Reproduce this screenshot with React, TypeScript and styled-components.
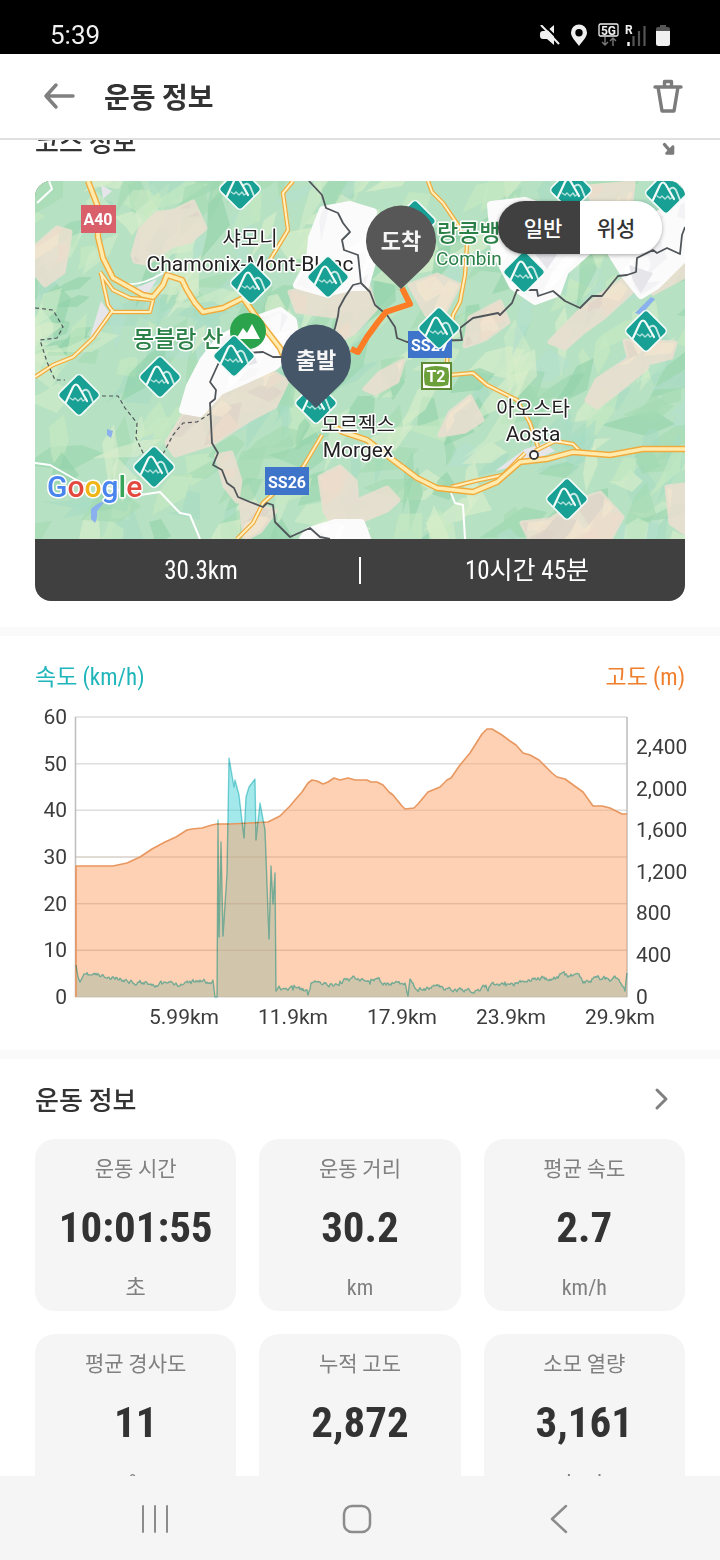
import React, { useLayoutEffect, useRef, useState } from 'react';
import styled, { createGlobalStyle } from 'styled-components';

const GlobalStyle = createGlobalStyle`
  *, *::before, *::after { box-sizing: border-box; }
  body { margin: 0; background: #fff; }
  button { border: 0; padding: 0; background: none; font: inherit; color: inherit; cursor: pointer; }
  h1, h2, p, dl, dt, dd { margin: 0; }
`;

const sans = `Roboto, 'Noto Sans CJK KR', sans-serif`;
const hangul = `'Noto Sans CJK KR', sans-serif`;
const narrow = `'Roboto Condensed', Roboto, 'Noto Sans CJK KR', sans-serif`;

/* ---------- page shell ---------- */

const Screen = styled.div`
  display: flex;
  flex-direction: column;
  height: 100vh;
  background: #fff;
  color: #333;
  font-family: ${hangul};
`;

const StatusBar = styled.div`
  flex: none;
  display: flex;
  align-items: flex-end;
  justify-content: space-between;
  height: 54px;
  padding: 0 50px 4px;
  background: #000;
  color: #f0f0f0;
`;

const Clock = styled.time`
  font: 400 26px/30px ${sans};
`;

const StatusIcons = styled.div`
  display: flex;
  align-items: center;
  gap: 10px;
  height: 30px;
`;

const AppBar = styled.header`
  flex: none;
  display: flex;
  align-items: center;
  height: 86px;
  padding: 0 35px 0 43px;
  border-bottom: 2px solid #e0e0e0;
`;

const IconButton = styled.button`
  display: flex;
  align-items: center;
  justify-content: center;
  width: 34px;
  height: 40px;
`;

const AppTitle = styled.h1`
  flex: 1;
  padding-left: 27px;
  font-size: 28px;
  line-height: 40px;
  font-weight: 700;
`;

const Content = styled.main`
  flex: 1;
  min-height: 0;
  overflow-y: auto;
  scrollbar-width: none;
`;

const Section = styled.section`
  padding: 0 35px 26px;
  & + & { border-top: 9px solid #fafafa; }
`;

const SectionHead = styled.div`
  display: flex;
  align-items: center;
  justify-content: space-between;
  height: 80px;
  padding-right: 6px;
`;

const SectionTitle = styled.h2`
  font-size: 26px;
  line-height: 36px;
  font-weight: 500;
`;

const NavBar = styled.nav`
  flex: none;
  display: grid;
  grid-template-columns: repeat(3, 1fr);
  height: 84px;
  padding: 2px 60px 0 54px;
  background: #f5f5f5;
`;

const NavButton = styled.button`
  display: flex;
  align-items: center;
  justify-content: center;
`;

/* ---------- course card ---------- */

const CourseCard = styled.div`
  position: relative;
  overflow: hidden;
  border-radius: 16px;
  background: #404040;
`;

const MapSvg = styled.svg`
  display: block;
  width: 100%;
  height: auto;
`;

const MapSwitch = styled.div`
  position: absolute;
  top: 20px;
  right: 23px;
  display: flex;
  overflow: hidden;
  border-radius: 27px;
  box-shadow: 0 1px 4px rgba(0, 0, 0, 0.35);
`;

const MapSwitchButton = styled.button<{ $active: boolean; $side: 'left' | 'right' }>`
  width: 82px;
  height: 53px;
  padding: ${(p) => (p.$side === 'left' ? '0 0 2px 8px' : '0 10px 2px 0')};
  background: ${(p) => (p.$active ? '#404040' : '#fff')};
  color: ${(p) => (p.$active ? '#fff' : '#333')};
  font-size: 21px;
  font-weight: 500;
`;

const CourseSummary = styled.div`
  display: grid;
  grid-template-columns: 1fr 2px 1fr;
  align-items: center;
  height: 62px;
  color: #fff;
  font: 400 25px/36px ${narrow};
  text-align: center;
`;

const SummaryText = styled.span`
  padding: 2px 0 0 8px;
`;

const SummaryRule = styled.span`
  height: 27px;
  background: #fff;
`;

/* ---------- chart ---------- */

const ChartLegend = styled.div`
  display: flex;
  justify-content: space-between;
  padding-top: 25px;
  font: 400 23px/34px ${narrow};
`;

const LegendItem = styled.span<{ $color: string }>`
  color: ${(p) => p.$color};
`;

const ChartSvg = styled.svg`
  display: block;
  overflow: visible;
  width: 100%;
  height: auto;
  margin-top: 5px;
  font: 400 21px ${sans};
`;

/* ---------- stats ---------- */

const StatGrid = styled.dl`
  display: grid;
  grid-template-columns: repeat(3, 1fr);
  gap: 23px;
`;

const StatCard = styled.div`
  display: flex;
  flex-direction: column;
  align-items: center;
  height: 172px;
  padding-top: 13px;
  border-radius: 20px;
  background: #f5f5f5;
`;

const StatLabel = styled.dt`
  color: #808080;
  font-size: 21px;
  line-height: 30px;
`;

const StatValue = styled.dd`
  margin-top: 15px;
  font: 700 43px/60px ${narrow};
`;

const StatUnit = styled.dd`
  margin-top: 16px;
  color: #808080;
  font: 400 22px/30px ${narrow};
`;

/* ---------- data ---------- */

type Point = [number, number];

const poly = (pts: Point[]) => pts.map((p) => p.join(' ')).join(' ');
const path = (pts: Point[]) => 'M' + pts.map((p) => p.join(' ')).join('L');

const randomFrom = (seed: number) => {
  let s = seed;
  return () => {
    s = (s * 16807) % 2147483647;
    return s / 2147483647;
  };
};

/* Ridge shading: long, thin facets that mostly run south-west to north-east. */
const makeFacets = (seed: number, count: number, tones: string[]) => {
  const rnd = randomFrom(seed);
  return Array.from({ length: count }, () => {
    const cx = rnd() * 680 - 15;
    const cy = rnd() * 380 - 10;
    const len = 12 + rnd() * 28;
    const wid = 6 + rnd() * 13;
    const a = -0.8 + (rnd() - 0.5) * 1.5;
    const c = Math.cos(a);
    const s = Math.sin(a);
    const corner = (u: number, v: number): Point => [
      Math.round(cx + u * c - v * s),
      Math.round(cy + u * s + v * c),
    ];
    return {
      fill: tones[Math.floor(rnd() * tones.length)],
      pts: [
        corner(-len, (rnd() - 0.5) * wid),
        corner(-len * 0.3, -wid * rnd()),
        corner(len * 0.5, -wid * 0.8),
        corner(len, (rnd() - 0.5) * wid),
        corner(len * 0.2, wid),
      ] as Point[],
    };
  });
};

const forestFacets = makeFacets(77, 380, ['#8fd2a8', '#a3dab3', '#d0ecc8', '#c6e9c2', '#a6dcc4', '#dbefcb', '#9ad6ae', '#b4e0cd']);
const rockFacets = makeFacets(19, 260, ['#f3e6cf', '#ddd3c8', '#ecdccb', '#e2dfd0']);
const snowFacets = makeFacets(41, 160, ['#ffffff', '#f0f0f3', '#f6f6f8']);

const rockAreas: Point[][] = [
  [[98, 74], [105, 49], [122, 33], [140, 30], [158, 21], [170, 47], [155, 60], [138, 64], [112, 82], [100, 80]],
  [[0, 66], [22, 47], [35, 51], [32, 70], [28, 91], [10, 104], [0, 92]],
  [[132, 262], [150, 232], [180, 215], [205, 190], [232, 188], [252, 200], [240, 225], [215, 238], [178, 262], [140, 274]],
  [[182, 275], [196, 272], [205, 300], [202, 320], [190, 305]],
  [[285, 296], [305, 286], [320, 300], [322, 320], [352, 307], [363, 319], [352, 329], [328, 339], [302, 350], [290, 330]],
  [[487, 342], [515, 339], [548, 318], [565, 312], [587, 336], [575, 358], [495, 358]],
  [[632, 306], [650, 304], [650, 352], [636, 342]],
  [[552, 219], [562, 199], [592, 179], [612, 186], [588, 206], [562, 226]],
  [[415, 232], [435, 216], [447, 239], [430, 250], [405, 254]],
  [[515, 161], [548, 127], [595, 94], [604, 104], [570, 135], [548, 151], [530, 167]],
  [[435, 137], [465, 121], [473, 141], [450, 158], [430, 165]],
  [[608, 100], [648, 77], [650, 95], [618, 112]],
  [[255, 111], [298, 104], [320, 110], [300, 135], [262, 130]],
  [[305, 127], [332, 101], [340, 128], [318, 152], [302, 160]],
  [[375, 104], [402, 94], [424, 104], [410, 130], [392, 134]],
  [[330, 208], [345, 192], [368, 180], [362, 200], [340, 212]],
  [[552, 6], [598, 2], [596, 22], [560, 26]],
  [[206, 320], [240, 330], [225, 350], [210, 358]],
  [[590, 160], [640, 162], [636, 176], [596, 186]],
];

const snowAreas: Point[][] = [
  [[277, 57], [288, 29], [315, 24], [338, 31], [336, 47], [340, 71], [330, 106], [315, 106], [290, 112], [262, 104], [275, 80]],
  [[148, 229], [155, 205], [168, 180], [185, 158], [225, 137], [245, 130], [258, 140], [262, 166], [240, 185], [212, 198], [185, 210], [165, 232]],
  [[456, 24], [490, 20], [545, 40], [562, 62], [530, 90], [522, 112], [500, 120], [478, 105], [460, 70]],
  [[575, 70], [610, 40], [650, 20], [650, 76], [622, 104], [606, 114], [590, 94]],
  [[274, 350], [300, 342], [326, 342], [332, 358], [268, 358]],
];

const majorRoads: Point[][] = [
  [[53, 0], [63, 26], [63, 56], [68, 77], [78, 97], [108, 114], [118, 116], [128, 104], [132, 94], [147, 99], [152, 109], [160, 122], [168, 131], [188, 127], [208, 117], [225, 141], [245, 167], [255, 190]],
  [[300, 246], [308, 251], [332, 259], [358, 279], [382, 297], [402, 307], [438, 311], [462, 301], [485, 281], [512, 278], [538, 271], [575, 274], [608, 268], [650, 268]],
];

const minorRoads: Point[][] = [
  [[65, 91], [78, 109], [95, 117], [118, 119], [115, 131], [78, 131], [73, 124], [66, 92]],
  [[78, 129], [58, 157], [38, 176], [18, 184], [0, 196]],
  [[258, 0], [248, 12], [253, 49], [232, 84]],
  [[393, 0], [397, 11], [408, 22], [425, 47], [432, 64], [430, 94], [425, 121], [418, 134], [412, 180], [415, 194], [438, 192], [452, 204], [482, 219], [495, 242], [503, 266]],
  [[287, 254], [268, 286], [228, 322], [218, 342], [202, 358]],
  [[500, 270], [520, 260], [538, 263], [545, 270]],
  [[416, 306], [440, 300], [468, 294], [490, 272]],
];

const borders: Point[][] = [
  [[274, 0], [287, 14], [291, 27], [303, 32], [308, 42], [315, 51], [307, 59], [309, 69], [323, 74], [326, 102], [335, 111], [340, 124], [352, 134], [360, 146], [362, 157], [372, 161], [427, 159], [425, 147], [438, 137], [463, 132], [465, 134], [477, 122], [482, 109], [502, 109], [503, 115], [518, 110], [530, 120], [545, 127], [557, 115], [567, 115], [583, 95], [592, 94], [601, 91], [602, 77], [618, 69], [622, 72], [632, 67], [645, 73], [647, 54], [650, 46]],
  [[326, 102], [318, 104], [310, 116], [304, 127], [303, 135], [300, 147], [290, 172], [247, 176], [238, 176], [228, 171], [210, 172], [185, 179], [175, 201], [181, 209], [180, 218], [175, 222], [177, 262], [183, 272], [178, 284], [187, 289], [192, 302], [199, 307], [203, 316], [215, 321], [228, 326], [232, 322], [238, 324], [240, 341], [255, 356], [275, 347], [285, 356], [295, 358]],
];

const regionBorders: Point[][] = [
  [[0, 127], [18, 129], [28, 146], [22, 157], [5, 159], [12, 181], [20, 199], [30, 199]],
  [[60, 215], [83, 215], [90, 227], [102, 242], [101, 257], [110, 276]],
  [[128, 273], [138, 254], [148, 242], [162, 241], [176, 232]],
];

const peaks: Point[] = [
  [205, 8], [536, 9], [631, 12], [216, 102], [293, 96], [380, 40], [489, 91], [611, 150],
  [404, 147], [125, 196], [44, 214], [199, 175], [119, 286], [532, 318], [281, 222],
];

const route: Point[] = [[367, 107], [375, 123], [351, 131], [343, 141], [332, 156], [323, 171], [316, 168]];

const elevation: Point[] = [
  [41, 166], [78, 166], [92, 163], [105, 157], [117, 149], [130, 142], [141, 137], [152, 130], [157, 129],
  [167, 128], [177, 125], [182, 124], [195, 124], [215, 123], [233, 122], [237, 120], [241, 118], [245, 116],
  [251, 110], [255, 106], [260, 100], [267, 92], [273, 83], [277, 80], [282, 81], [288, 84], [293, 82],
  [299, 78], [305, 80], [313, 78], [320, 80], [332, 80], [336, 82], [342, 82], [348, 85], [354, 92],
  [358, 95], [367, 106], [370, 109], [379, 108], [383, 104], [393, 92], [405, 87], [412, 80], [416, 78],
  [425, 65], [435, 53], [447, 34], [452, 29], [457, 29], [467, 35], [475, 41], [481, 45], [488, 53],
  [495, 55], [504, 60], [517, 73], [522, 77], [530, 79], [548, 92], [558, 106], [567, 106], [575, 108],
  [587, 114], [592, 114],
];

const jitter = (pts: Point[], seed: number): Point[] => {
  const rnd = randomFrom(seed);
  const out: Point[] = [];
  let drift = 0;
  pts.slice(1).forEach(([x1, y1], i) => {
    const [x0, y0] = pts[i];
    out.push([x0, y0]);
    for (let x = x0 + 1; x < x1; x += 1) {
      const t = (x - x0) / (x1 - x0);
      drift = drift * 0.7 + (rnd() - 0.5) * 4;
      out.push([x, Math.round((y0 + (y1 - y0) * t + drift) * 10) / 10]);
    }
  });
  out.push(pts[pts.length - 1]);
  return out;
};

const speed: Point[] = [
  [41, 265], [43, 277], [45, 282],
  ...jitter([[48, 276], [62, 275], [75, 279], [90, 280], [110, 282], [127, 284], [140, 284], [155, 281], [165, 280], [175, 283], [178, 280]], 11),
  [180, 297], [182, 297], [183, 120], [184, 237], [186, 142], [188, 236], [192, 173], [194, 58], [199, 87],
  [200, 80], [204, 95], [209, 138], [211, 97], [214, 87], [220, 79], [221, 140], [225, 103], [230, 130],
  [234, 239], [236, 166], [238, 204], [240, 173], [241, 291],
  ...jitter([[243, 288], [250, 289], [258, 290], [272, 290], [273, 295], [276, 283], [290, 283], [300, 284], [305, 281], [315, 279], [318, 276], [325, 281], [335, 284], [340, 279], [350, 283], [370, 283], [373, 296], [375, 279], [380, 288], [388, 290], [398, 286], [410, 290], [430, 290], [440, 291], [450, 287], [453, 291], [456, 284], [470, 282], [490, 282], [500, 278], [515, 279], [530, 275], [545, 277], [548, 283], [556, 282], [560, 277], [570, 279], [583, 279], [590, 291], [592, 273]], 29),
];

const stats = [
  { label: '운동 시간', value: '10:01:55', unit: '초' },
  { label: '운동 거리', value: '30.2', unit: 'km' },
  { label: '평균 속도', value: '2.7', unit: 'km/h' },
  { label: '평균 경사도', value: '11', unit: '%' },
  { label: '누적 고도', value: '2,872', unit: 'm' },
  { label: '소모 열량', value: '3,161', unit: 'kcal' },
];

/* ---------- map ---------- */

const PeakMarker = ({ at }: { at: Point }) => (
  <g transform={`translate(${at[0]} ${at[1]})`}>
    <rect x="-15.500" y="-15.500" width="31" height="31" rx="4" transform="rotate(45)" fill="#18a094" stroke="#f4fbf8" strokeWidth="1.600" />
    <g fill="none" stroke="#f4fbf8" strokeLinecap="round" strokeLinejoin="round">
      <path d="M-13 7L-6-8Q-3-13 0-8L8 6" strokeWidth="2.200" />
      <path d="M-9 3l3 2 2-2 3 3 3-3 2 3 3-2" strokeWidth="1.400" opacity=".7" />
      <path d="M4-4Q7-7 10-3L14 7" strokeWidth="2" opacity=".8" />
    </g>
  </g>
);

const Pin = ({ at, color, label }: { at: Point; color: string; label: string }) => (
  <g transform={`translate(${at[0]} ${at[1]})`}>
    <path d="M0 48L-23 26A35 35 0 1 1 23 26Z" fill={color} />
    <text y="8" textAnchor="middle" fill="#f5f5f5" fontFamily={hangul} fontSize="22" fontWeight="700">{label}</text>
  </g>
);

const halo = { stroke: '#fff', strokeWidth: 3, paintOrder: 'stroke', strokeLinejoin: 'round' } as const;

const Facets = ({ items, opacity }: { items: ReturnType<typeof makeFacets>; opacity: number }) => (
  <g>
    {items.map((f, i) => <polygon key={i} points={poly(f.pts)} fill={f.fill} opacity={opacity} />)}
  </g>
);

const CourseMap = () => (
  <MapSvg viewBox="0 0 650 358" role="img" aria-label="코스 지도">
    <defs>
      <clipPath id="rock">{rockAreas.map((a, i) => <polygon key={i} points={poly(a)} />)}</clipPath>
      <clipPath id="snow">{snowAreas.map((a, i) => <polygon key={i} points={poly(a)} />)}</clipPath>
    </defs>
    <rect width="650" height="358" fill="#b6e1c2" />
    <Facets items={forestFacets} opacity={0.6} />
    <g fill="#e9dfd0" stroke="#e9dfd0" strokeWidth="5" strokeLinejoin="round" opacity=".9">
      {rockAreas.map((a, i) => <polygon key={i} points={poly(a)} />)}
    </g>
    <g clipPath="url(#rock)"><Facets items={rockFacets} opacity={0.7} /></g>
    <g fill="#fbfbfb" stroke="#fbfbfb" strokeWidth="8" strokeLinejoin="round">
      {snowAreas.map((a, i) => <polygon key={i} points={poly(a)} />)}
    </g>
    <g clipPath="url(#snow)"><Facets items={snowFacets} opacity={0.7} /></g>
    <g fill="#e6e5ea">
      <polygon points="498 70 530 62 512 88" />
      <polygon points="594 84 618 92 606 112 598 100" />
      <polygon points="196 190 215 160 222 182" />
      <polygon points="98 108 122 98 112 114" />
      <polygon points="66 120 76 134 62 156 54 160" />
      <polygon points="66 4 77 10 68 18" />
      <polygon points="460 290 490 268 510 262 520 270 492 282" />
    </g>
    <g fill="#8ab0ee">
      <polygon points="600 132 616 116 620 118 606 134" />
      <path d="M56 328q6-6 14-8l-8 10q1 6-2 12l-4-4z" />
      <polygon points="72 248 78 250 76 257 72 254" />
    </g>
    <g fill="none" stroke="#fff" strokeWidth="2" strokeLinejoin="round">
      <path d="M0 282L15 284L45 301L105 314L125 311L145 332L155 334L165 358" />
      <path d="M416 312L420 322L428 324L430 358" />
      <path d="M2 22L17 8L14 0M80 99Q98 110 128 92" />
    </g>
    <g fill="none" stroke="#f1ab3c" strokeLinejoin="round" strokeWidth="4.400">
      {minorRoads.map((r, i) => <path key={i} d={path(r)} />)}
    </g>
    <g fill="none" stroke="#fff0bf" strokeLinejoin="round" strokeWidth="2">
      {minorRoads.map((r, i) => <path key={i} d={path(r)} />)}
    </g>
    <g fill="none" stroke="#f1ab3c" strokeLinejoin="round" strokeWidth="6.400">
      {majorRoads.map((r, i) => <path key={i} d={path(r)} />)}
    </g>
    <g fill="none" stroke="#ffebae" strokeLinejoin="round" strokeWidth="3.600">
      {majorRoads.map((r, i) => <path key={i} d={path(r)} />)}
    </g>
    <g fill="none" stroke="#50555a" strokeWidth="1.800" strokeLinejoin="round">
      {borders.map((b, i) => <path key={i} d={path(b)} />)}
    </g>
    <g fill="none" stroke="#50555a" strokeWidth="1.200" strokeDasharray="4 3">
      {regionBorders.map((b, i) => <path key={i} d={path(b)} />)}
    </g>

    <g fontFamily={sans} fontSize="20" fill="#222" textAnchor="middle" {...halo}>
      <text x="215" y="65">샤모니</text>
      <text x="323" y="251">모르젝스</text>
      <text x="498" y="235">아오스타</text>
    </g>
    <g fontFamily={sans} fontSize="21" fill="#222" textAnchor="middle" {...halo}>
      <text x="215" y="90">Chamonix-Mont-Blanc</text>
      <text x="323" y="276">Morgex</text>
      <text x="498" y="260">Aosta</text>
    </g>
    <circle cx="499" cy="274" r="4" fill="#fff" stroke="#333" strokeWidth="1.800" />
    <g fontFamily={sans} fontWeight="500" fontSize="23" fill="#2b8048" {...halo}>
      <text x="98" y="166">몽블랑 산</text>
      <text x="402" y="60">랑콩뱅</text>
      <text x="401" y="84" fontWeight="400" fontSize="19">Combin</text>
    </g>

    <circle cx="213" cy="150" r="18" fill="#2ba24c" />
    <path d="M201 158l7-11 4 5 5-9 8 15z" fill="#fff" />

    <g fontFamily={sans} fontWeight="700" fontSize="16" fill="#fff" textAnchor="middle">
      <rect x="46" y="24" width="35" height="28" fill="#d9606a" />
      <text x="63" y="44">A40</text>
      <rect x="230" y="286" width="44" height="28" fill="#3f74cb" />
      <text x="252" y="307">SS26</text>
      <rect x="373" y="150" width="44" height="27" fill="#3f74cb" />
      <text x="395" y="170">SS27</text>
      <rect x="387" y="182" width="29" height="26" fill="#fff" stroke="#5f8a35" strokeWidth="2" />
      <path d="M390 187q11-4 23 0q2 8 0 17q-12 3-23 0q-2-9 0-17z" fill="#6ba03a" />
      <text x="401" y="201">T2</text>
    </g>

    {peaks.map((p, i) => <PeakMarker key={i} at={p} />)}
    <path d={path(route)} fill="none" stroke="#fd7c26" strokeWidth="6" strokeLinejoin="round" />
    <Pin at={[281, 179]} color="#465669" label="출발" />
    <Pin at={[366, 60]} color="#575757" label="도착" />

    <text x="12" y="316" fontFamily={sans} fontSize="30" fontWeight="500" {...halo}>
      <tspan fill="#4a86ee">G</tspan>
      <tspan fill="#e2483d">o</tspan>
      <tspan fill="#f0b414">o</tspan>
      <tspan fill="#4a86ee">g</tspan>
      <tspan fill="#36a557">l</tspan>
      <tspan fill="#e2483d">e</tspan>
    </text>
  </MapSvg>
);

/* ---------- chart ---------- */

const SpeedElevationChart = () => {
  const speedLine = path(speed);
  const elevationLine = path(elevation);
  return (
    <ChartSvg viewBox="0 0 650 324" role="img" aria-label="속도와 고도">
      <g stroke="#dedede" strokeWidth="1.500">
        {[0, 1, 2, 3, 4, 5, 6].map((i) => (
          <line key={i} x1="40" x2="592" y1={17 + (i * 280) / 6} y2={17 + (i * 280) / 6} />
        ))}
      </g>
      <g stroke="#bdbdbd" strokeWidth="1.500">
        <line x1="40.500" x2="40.500" y1="17" y2="297" />
        <line x1="592" x2="592" y1="17" y2="297" />
      </g>
      <path d={`${speedLine}L592 297L41 297Z`} fill="#47d3d9" fillOpacity=".5" />
      <path d={`${elevationLine}L592 297L41 297Z`} fill="#ffa369" fillOpacity=".5" />
      <g stroke="#c8a58c" strokeOpacity=".35">
        {[3, 4, 5].map((i) => (
          <line key={i} x1="41" x2="592" y1={17 + (i * 280) / 6} y2={17 + (i * 280) / 6} />
        ))}
      </g>
      <path d={`M41 297L41 166${elevationLine.replace('M', 'L')}`} fill="none" stroke="#e8975f" strokeWidth="1.600" strokeLinejoin="round" />
      <path d={speedLine} fill="none" stroke="#3fc0c4" strokeWidth="1.400" strokeLinejoin="round" opacity=".65" style={{ mixBlendMode: 'multiply' }} />
      <g fill="#3c3c3c">
        <g textAnchor="end">
          {[60, 50, 40, 30, 20, 10, 0].map((v, i) => (
            <text key={v} x="32" y={Math.round(24 + (i * 280) / 6)}>{v}</text>
          ))}
        </g>
        {['2,400', '2,000', '1,600', '1,200', '800', '400', '0'].map((v, i) => (
          <text key={v} x="601" y={Math.round(54 + i * 41.6)}>{v}</text>
        ))}
        <g textAnchor="middle">
          {['5.99km', '11.9km', '17.9km', '23.9km', '29.9km'].map((v, i) => (
            <text key={v} x={149 + i * 109} y="324">{v}</text>
          ))}
        </g>
      </g>
    </ChartSvg>
  );
};

/* ---------- status icons ---------- */

const MuteIcon = () => (
  <svg width="20" height="20" viewBox="0 0 20 20" aria-hidden="true">
    <path d="M0 9q0-3 3-3h4l7-6v20l-7-6H3q-3 0-3-3z" fill="#f0f0f0" />
    <path d="M3-1L21 17" stroke="#000" strokeWidth="2" />
    <path d="M1 0L19 19" stroke="#f0f0f0" strokeWidth="2" />
  </svg>
);

const LocationIcon = () => (
  <svg width="18" height="22" viewBox="0 0 18 22" aria-hidden="true">
    <path d="M9 22C5 16.500 1 13 1 8.500a8 8 0 0 1 16 0C17 13 13 16.500 9 22zM9 5a3.700 3.700 0 1 0 0 7.400A3.700 3.700 0 0 0 9 5z" fill="#f0f0f0" fillRule="evenodd" />
  </svg>
);

const NetworkIcon = () => (
  <svg width="48" height="24" viewBox="0 0 48 24" fontFamily="Roboto, sans-serif" fontWeight="700" aria-hidden="true">
    <rect x="1" y="1" width="19" height="12" rx="1.500" fill="none" stroke="#f0f0f0" strokeWidth="1.300" />
    <text x="10.500" y="11.500" fontSize="12" textAnchor="middle" fill="#f0f0f0">5G</text>
    <path d="M7 14v8M4 19l3 3 3-3M15 23v-8M12 18l3-3 3 3" fill="none" stroke="#777" strokeWidth="1.400" />
    <text x="27" y="11" fontSize="12" fill="#f0f0f0">R</text>
    <path d="M30.500 19v4" stroke="#f0f0f0" strokeWidth="2.500" />
    <path d="M35.500 13v10M41 8v15M46.500 3v20" stroke="#555" strokeWidth="2.200" />
  </svg>
);

const BatteryIcon = () => (
  <svg width="14" height="22" viewBox="0 0 14 22" aria-hidden="true">
    <path d="M4 1h6v2h2q2 0 2 2v3H0V5q0-2 2-2h2z" fill="#555" />
    <path d="M0 7h14v12.500q0 2.500-2.500 2.500h-9Q0 22 0 19.500z" fill="#f0f0f0" />
  </svg>
);

/* ---------- screen ---------- */

const INITIAL_SCROLL = 39;

export default function App() {
  const contentRef = useRef<HTMLElement>(null);
  const [mapType, setMapType] = useState<'normal' | 'satellite'>('normal');

  useLayoutEffect(() => {
    if (contentRef.current) contentRef.current.scrollTop = INITIAL_SCROLL;
  }, []);

  return (
    <Screen>
      <GlobalStyle />
      <StatusBar>
        <Clock>5:39</Clock>
        <StatusIcons>
          <MuteIcon />
          <LocationIcon />
          <NetworkIcon />
          <BatteryIcon />
        </StatusIcons>
      </StatusBar>

      <AppBar>
        <IconButton aria-label="뒤로">
          <svg width="34" height="30" viewBox="0 0 34 30" fill="none" stroke="#808080" strokeWidth="3.500" strokeLinecap="round" strokeLinejoin="round">
            <path d="M13 4L3 15L13 26M3 15H30" />
          </svg>
        </IconButton>
        <AppTitle>운동 정보</AppTitle>
        <IconButton aria-label="삭제">
          <svg width="34" height="36" viewBox="0 0 34 36" fill="none" stroke="#7c7c7c" strokeWidth="3.400" strokeLinejoin="round">
            <path d="M4 9H30" strokeLinecap="round" />
            <path d="M13.500 9V3.500h7V9M7 9l4 24h12l4-24" />
          </svg>
        </IconButton>
      </AppBar>

      <Content ref={contentRef}>
        <Section>
          <SectionHead>
            <SectionTitle>코스 정보</SectionTitle>
            <IconButton aria-label="지도 확대">
              <svg width="28" height="30" viewBox="0 0 28 30" fill="#7c7c7c" stroke="#7c7c7c" strokeWidth="2.600" strokeLinejoin="round" strokeLinecap="round">
                <path d="M16.500 18.500L22 25" strokeWidth="3.400" />
                <path d="M18.500 27.500H25V20.500Z" />
                <path d="M10.500 10.500L5 5" strokeWidth="3.400" />
                <path d="M9.500 2.500H3V9.500Z" />
              </svg>
            </IconButton>
          </SectionHead>
          <CourseCard>
            <CourseMap />
            <MapSwitch role="group" aria-label="지도 종류">
              <MapSwitchButton $side="left" $active={mapType === 'normal'} aria-pressed={mapType === 'normal'} onClick={() => setMapType('normal')}>
                일반
              </MapSwitchButton>
              <MapSwitchButton $side="right" $active={mapType === 'satellite'} aria-pressed={mapType === 'satellite'} onClick={() => setMapType('satellite')}>
                위성
              </MapSwitchButton>
            </MapSwitch>
            <CourseSummary>
              <SummaryText>30.3km</SummaryText>
              <SummaryRule />
              <SummaryText>10시간 45분</SummaryText>
            </CourseSummary>
          </CourseCard>
        </Section>

        <Section>
          <ChartLegend>
            <LegendItem $color="#1fb5ba">속도 (km/h)</LegendItem>
            <LegendItem $color="#f07f2d">고도 (m)</LegendItem>
          </ChartLegend>
          <SpeedElevationChart />
        </Section>

        <Section>
          <SectionHead>
            <SectionTitle>운동 정보</SectionTitle>
            <IconButton aria-label="운동 정보 더보기">
              <svg width="20" height="24" viewBox="0 0 20 24" fill="none" stroke="#808080" strokeWidth="3" strokeLinecap="round" strokeLinejoin="round">
                <path d="M5 3L14 12L5 21" />
              </svg>
            </IconButton>
          </SectionHead>
          <StatGrid>
            {stats.map((s) => (
              <StatCard key={s.label}>
                <StatLabel>{s.label}</StatLabel>
                <StatValue>{s.value}</StatValue>
                <StatUnit>{s.unit}</StatUnit>
              </StatCard>
            ))}
          </StatGrid>
        </Section>
      </Content>

      <NavBar aria-label="시스템 탐색">
        <NavButton aria-label="최근 앱">
          <svg width="28" height="30" viewBox="0 0 28 30" stroke="#8c8c8c" strokeWidth="2" strokeLinecap="round">
            <path d="M2 2V28M14 2V28M26 2V28" />
          </svg>
        </NavButton>
        <NavButton aria-label="홈">
          <svg width="30" height="30" viewBox="0 0 30 30" fill="none" stroke="#8c8c8c" strokeWidth="2.500">
            <rect x="2" y="2" width="26" height="26" rx="8" />
          </svg>
        </NavButton>
        <NavButton aria-label="뒤로 가기">
          <svg width="18" height="30" viewBox="0 0 18 30" fill="none" stroke="#8c8c8c" strokeWidth="2.500" strokeLinecap="round" strokeLinejoin="round">
            <path d="M16 2L2 15L16 28" />
          </svg>
        </NavButton>
      </NavBar>
    </Screen>
  );
}
